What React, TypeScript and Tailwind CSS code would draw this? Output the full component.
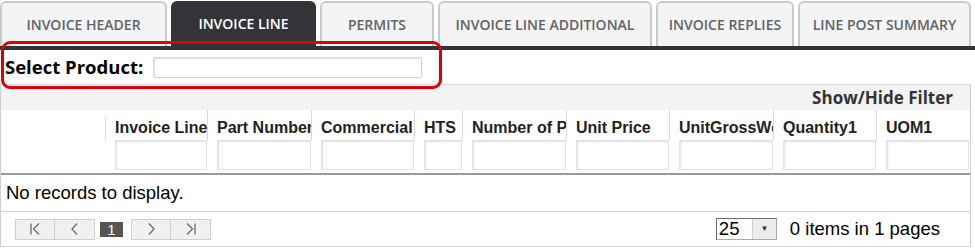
import React from 'react';

const tabs = [
  { label: 'INVOICE HEADER', width: 'w-[167px]' },
  { label: 'INVOICE LINE', width: 'w-[145px]', active: true },
  { label: 'PERMITS', width: 'w-[114px]' },
  { label: 'INVOICE LINE ADDITIONAL', width: 'w-[214px]' },
  { label: 'INVOICE REPLIES', width: 'w-[138px]' },
  { label: 'LINE POST SUMMARY', width: 'w-[173px]' },
];

const columns = [
  { title: 'Invoice Line', width: 'w-[102px]' },
  { title: 'Part Number', width: 'w-[104px]' },
  { title: 'Commercial', width: 'w-[103px]' },
  { title: 'HTS', width: 'w-[48px]' },
  { title: 'Number of Packages', width: 'w-[104px]' },
  { title: 'Unit Price', width: 'w-[103px]' },
  { title: 'UnitGrossWeight', width: 'w-[104px]' },
  { title: 'Quantity1', width: 'w-[103px]' },
  { title: 'UOM1', width: 'w-[93px]' },
];

function PagerIcon({ kind }: { kind: 'first' | 'prev' | 'next' | 'last' }) {
  return (
    <svg width="14" height="14" viewBox="0 0 14 14" fill="none" stroke="#6b6b6b" strokeWidth="1.3">
      {kind === 'first' && (
        <>
          <line x1="3" y1="1.5" x2="3" y2="12.5" />
          <polyline points="11,1.5 5.5,7 11,12.5" />
        </>
      )}
      {kind === 'prev' && <polyline points="9,1.5 4,7 9,12.5" />}
      {kind === 'next' && <polyline points="5,1.5 10,7 5,12.5" />}
      {kind === 'last' && (
        <>
          <polyline points="3,1.5 8.5,7 3,12.5" />
          <line x1="11" y1="1.5" x2="11" y2="12.5" />
        </>
      )}
    </svg>
  );
}

export default function App() {
  return (
    <div className="relative w-[975px] h-[249px] bg-white overflow-hidden">
      {/* Tabs */}
      <div className="flex items-end gap-[4px] h-[46px] pt-[1px] font-['Open_Sans',sans-serif]">
        {tabs.map((t) => (
          <div
            key={t.label}
            className={`${t.width} h-[45px] flex items-center justify-center rounded-t-[6px] text-[14px] font-semibold ${
              t.active
                ? 'bg-[#333438] text-white'
                : 'bg-[#f3f4f6] text-[#636363] border-2 border-b-0 border-[#c9cacc]'
            }`}
          >
            {t.label}
          </div>
        ))}
      </div>
      <div className="h-[4px] bg-[#333438]" />

      {/* Select Product */}
      <div className="h-[34px] flex items-center pl-[5px] gap-[10px]">
        <span className="font-['Open_Sans',sans-serif] font-bold text-[18.5px] text-black">Select Product:</span>
        <input
          type="text"
          className="w-[269px] h-[21px] border border-[#d4d4d4] rounded-[2px] bg-white shadow-[inset_1px_1px_2px_rgba(0,0,0,0.12)] outline-none"
        />
      </div>

      {/* Grid */}
      <div className="w-[971px] border-l border-r border-[#cfcfcf] font-['Liberation_Sans',Arial,sans-serif]">
        <div className="h-[26px] bg-[#f2f3f5] border-t border-[#dcdcdc] flex items-center justify-end pr-[17px]">
          <span className="font-['Open_Sans',sans-serif] font-bold text-[17px] text-[#333]">Show/Hide Filter</span>
        </div>

        <div className="flex h-[30px] items-center">
          <div className="w-[105px] h-[23px] self-end border-r border-[#d9d9d9]" />
          {columns.map((c, i) => (
            <div
              key={c.title}
              className={`${c.width} h-[30px] flex items-center pt-[5px] pl-[9px] overflow-hidden whitespace-nowrap text-[16px] font-bold text-[#222] ${
                i < columns.length - 1 ? 'border-r border-[#d9d9d9]' : ''
              }`}
            >
              {c.title}
            </div>
          ))}
        </div>

        <div className="flex h-[33px] items-start">
          <div className="w-[105px]" />
          {columns.map((c) => (
            <div key={c.title} className={`${c.width} pl-[9px] pr-[1px]`}>
              <div className="h-[30px] bg-white border border-[#e2e2e2] shadow-[inset_1px_1px_2px_rgba(0,0,0,0.12)]" />
            </div>
          ))}
        </div>

        <div className="h-[2px] bg-[#9a9a9a]" />

        <div className="h-[36px] flex items-center pl-[5px] text-[18.5px] text-black">No records to display.</div>

        <div className="h-[36px] border-t border-b border-[#d6d6d6] flex items-center pl-[14px] pr-[30px]">
          <div className="flex h-[21px] border border-[#cfcfcf] bg-[#f1f1f1]">
            <div className="w-[39px] flex items-center justify-center border-r border-[#cfcfcf]">
              <PagerIcon kind="first" />
            </div>
            <div className="w-[39px] flex items-center justify-center">
              <PagerIcon kind="prev" />
            </div>
          </div>
          <div className="ml-[5px] mr-[8px] w-[23px] h-[15px] bg-[#555] text-white text-[15px] leading-[15px] text-center">1</div>
          <div className="flex h-[21px] border border-[#cfcfcf] bg-[#f1f1f1]">
            <div className="w-[39px] flex items-center justify-center border-r border-[#cfcfcf]">
              <PagerIcon kind="next" />
            </div>
            <div className="w-[39px] flex items-center justify-center">
              <PagerIcon kind="last" />
            </div>
          </div>

          <div className="ml-auto flex items-center">
            <div className="flex h-[22px] w-[61px] border border-[#a9a9a9] border-l-[#6e6e6e] border-t-[#6e6e6e] bg-white">
              <span className="flex-1 text-[18.5px] leading-[20px] pl-[2px] text-black">25</span>
              <span className="w-[24px] flex items-center justify-center bg-[#ececec] border-l border-[#cfcfcf] text-[8px] text-[#333]">▼</span>
            </div>
            <span className="ml-[13px] text-[18.5px] text-black">0 items in 1 pages</span>
          </div>
        </div>
      </div>

      {/* Annotation highlight */}
      <div className="absolute left-[1px] top-[41px] w-[441px] h-[48px] border-[3px] border-[#e00000] rounded-[9px] pointer-events-none" />
    </div>
  );
}
